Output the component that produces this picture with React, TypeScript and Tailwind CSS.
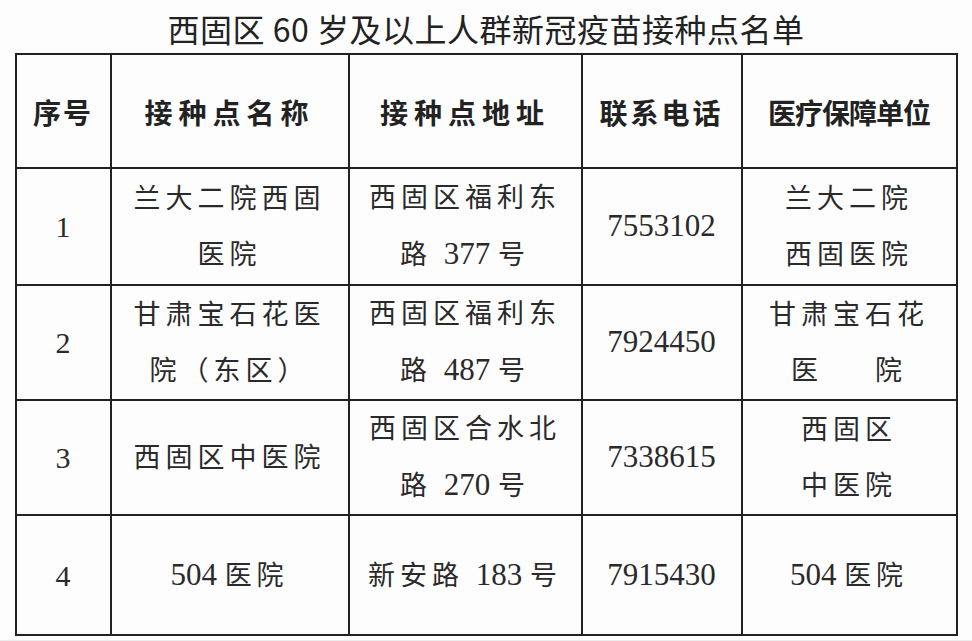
const SERIF = { fontFamily: '"Liberation Serif", "Noto Sans CJK SC", serif' }

type Row = {
  no: string
  name: string[]
  addr: string[]
  phone: string
  unit: React.ReactNode[]
}

const ROWS: Row[] = [
  { no: '1', name: ['兰大二院西固', '医院'], addr: ['西固区福利东', '路 377 号'], phone: '7553102', unit: ['兰大二院', '西固医院'] },
  {
    no: '2', name: ['甘肃宝石花医', '院（东区）'], addr: ['西固区福利东', '路 487 号'], phone: '7924450',
    unit: ['甘肃宝石花', <span key="u" className="inline-flex gap-[52px]"><span>医</span><span>院</span></span>],
  },
  { no: '3', name: ['西固区中医院'], addr: ['西固区合水北', '路 270 号'], phone: '7338615', unit: ['西固区', '中医院'] },
  { no: '4', name: ['504 医院'], addr: ['新安路 183 号'], phone: '7915430', unit: ['504 医院'] },
]

const HEIGHTS = ['h-[117px]', 'h-[115px]', 'h-[115px]', 'h-[120px]']

// digits keep Times spacing, CJK gets the wide tracking
function Mixed({ text }: { text: string }) {
  const parts = text.split(/(\d+ ?)/).filter(Boolean)
  return (
    <>
      {parts.map((p, i) =>
        /\d/.test(p)
          ? <span key={i} className="text-[31px] tracking-normal">{p}</span>
          : <span key={i}>{p}</span>
      )}
    </>
  )
}

function Lines({ items }: { items: React.ReactNode[] }) {
  return (
    <div className="flex flex-col items-center leading-[56px] tracking-[5px]">
      {items.map((t, i) => <div key={i}>{typeof t === 'string' ? <Mixed text={t} /> : t}</div>)}
    </div>
  )
}

const CELL = 'border-2 border-[#222] p-0 text-center'

export default function App() {
  return (
    <div className="w-[972px] h-[641px] overflow-hidden bg-[#fdfdfd] text-[#222] flex flex-col items-center">
      <h1
        className="shrink-0 h-[53px] pt-[8px] text-[32px] leading-[40px] font-normal text-center tracking-[0.5px]"
        style={{ fontFamily: '"Noto Sans CJK SC", sans-serif' }}
      >
        西固区 60 岁及以上人群新冠疫苗接种点名单
      </h1>
      <table className="shrink-0 w-[941px] border-collapse border-2 border-[#222] table-fixed" style={SERIF}>
        <colgroup>
          <col className="w-[95px]" />
          <col className="w-[238px]" />
          <col className="w-[233px]" />
          <col className="w-[160px]" />
          <col className="w-[215px]" />
        </colgroup>
        <thead>
          <tr className="h-[114px] text-[28px]">
            <th className={`${CELL} pt-[8px] tracking-[2px] font-bold`}>序号</th>
            <th className={`${CELL} pt-[8px] tracking-[6px] font-bold`}>接种点名称</th>
            <th className={`${CELL} pt-[8px] tracking-[6px] font-bold`}>接种点地址</th>
            <th className={`${CELL} pt-[8px] tracking-[3px] font-bold`}>联系电话</th>
            <th className={`${CELL} pt-[8px] tracking-[-1px] font-bold`}>医疗保障单位</th>
          </tr>
        </thead>
        <tbody className="text-[27px] text-[#2a2a2a]">
          {ROWS.map((r, i) => (
            <tr key={r.no} className={HEIGHTS[i]}>
              <td className={`${CELL} text-[30px]`}>{r.no}</td>
              <td className={CELL}><Lines items={r.name} /></td>
              <td className={CELL}><Lines items={r.addr} /></td>
              <td className={`${CELL} text-[31px]`}>{r.phone}</td>
              <td className={CELL}><Lines items={r.unit} /></td>
            </tr>
          ))}
        </tbody>
      </table>
      <div className="flex-1 min-h-0 w-full mt-[4px] bg-[#ececec]" />
    </div>
  )
}
